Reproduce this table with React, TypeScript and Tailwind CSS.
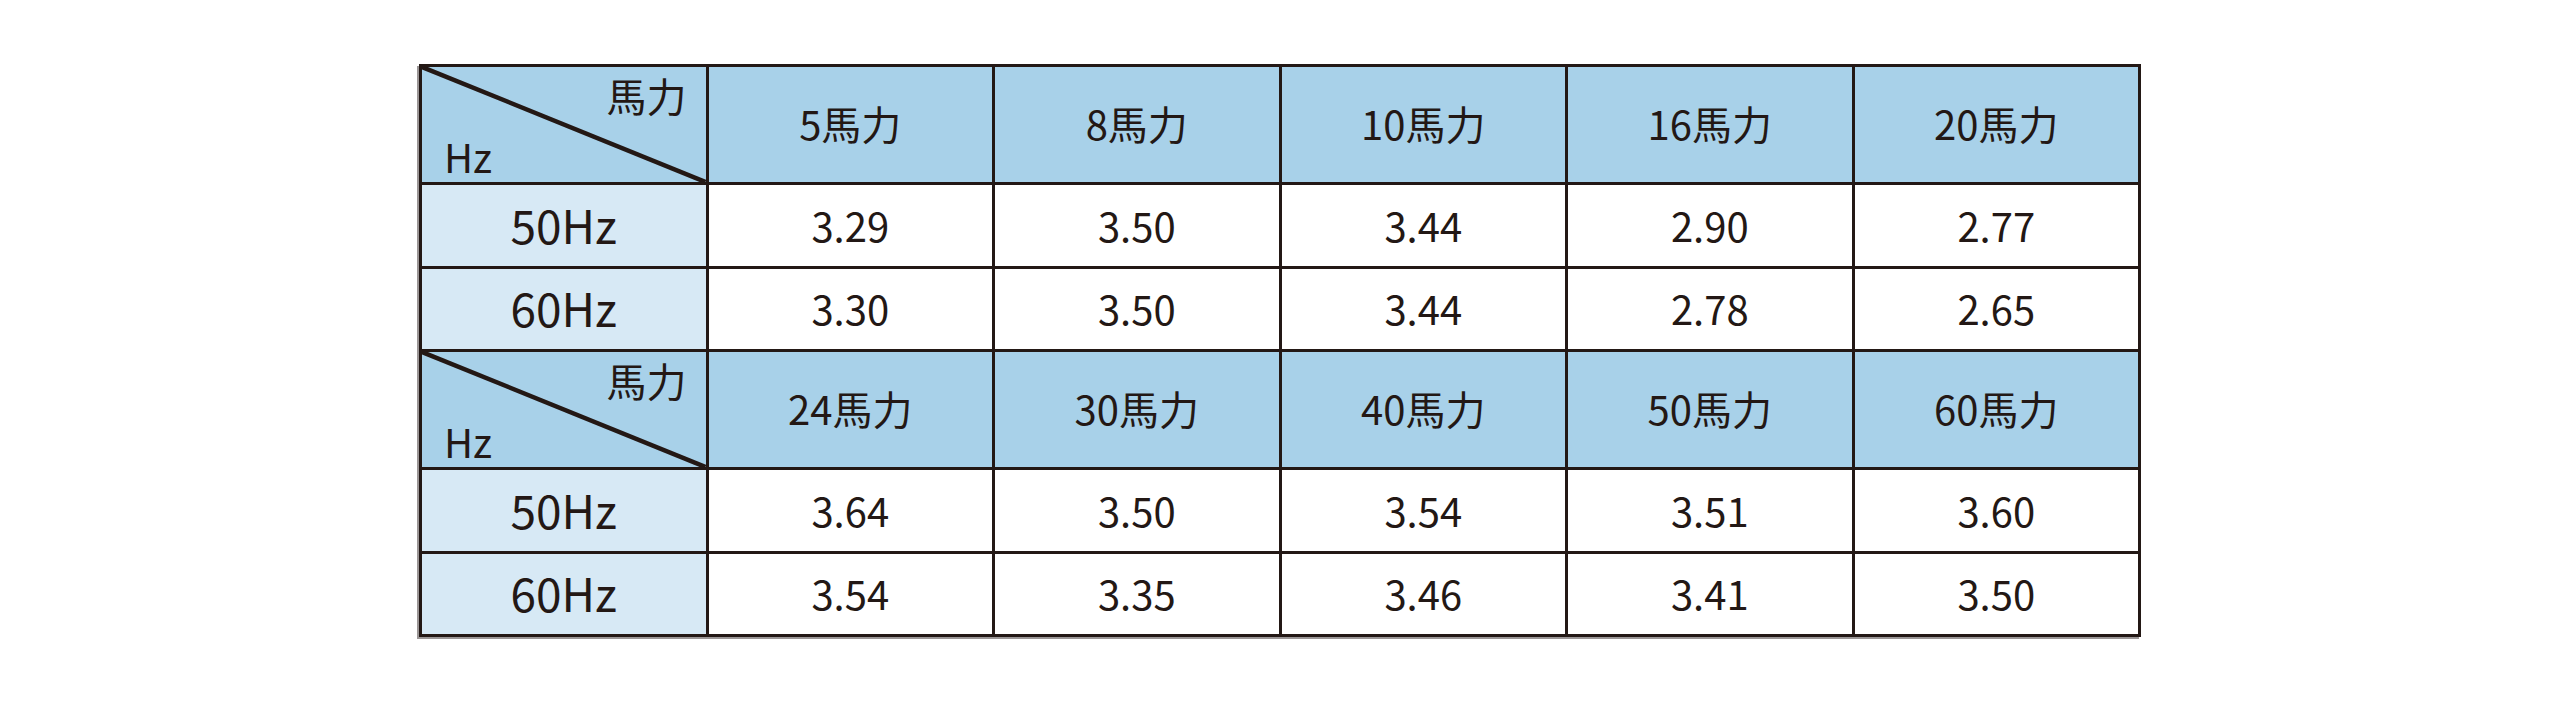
const font = { fontFamily: '"Noto Sans CJK JP", "Noto Sans", sans-serif' };

type Block = {
    heads: string[];
    hz50: string[];
    hz60: string[];
};

const blocks: Block[] = [
    {
        heads: ["5馬力", "8馬力", "10馬力", "16馬力", "20馬力"],
        hz50: ["3.29", "3.50", "3.44", "2.90", "2.77"],
        hz60: ["3.30", "3.50", "3.44", "2.78", "2.65"],
    },
    {
        heads: ["24馬力", "30馬力", "40馬力", "50馬力", "60馬力"],
        hz50: ["3.64", "3.50", "3.54", "3.51", "3.60"],
        hz60: ["3.54", "3.35", "3.46", "3.41", "3.50"],
    },
];

// the corner cell with the diagonal split
function CornerCell() {
    return (
        <div className="relative bg-[#a8d1e9]">
            <svg
                className="absolute inset-0 h-full w-full"
                preserveAspectRatio="none"
                viewBox="0 0 100 100"
            >
                <line
                    x1="0"
                    y1="0"
                    x2="100"
                    y2="100"
                    stroke="#231815"
                    strokeWidth="4.5"
                    vectorEffect="non-scaling-stroke"
                />
            </svg>
            <span className="absolute right-[19px] top-[8px] text-[40px] leading-none">
                馬力
            </span>
            <span className="absolute left-[22px] bottom-[6px] text-[40px] leading-none">
                Hz
            </span>
        </div>
    );
}

function HeadCell({ label }: { label: string }) {
    return (
        <div className="flex items-center justify-center bg-[#a8d1e9] text-[40px] leading-none pb-[4px]">
            {label}
        </div>
    );
}

function LabelCell({ label }: { label: string }) {
    return (
        <div className="flex items-center justify-center bg-[#d7e9f5] text-[46px] leading-none pb-[4px]">
            {label}
        </div>
    );
}

function ValueCell({ value }: { value: string }) {
    return (
        <div className="flex items-center justify-center bg-white text-[40px] leading-none pb-[2px]">
            {value}
        </div>
    );
}

export default function App() {
    return (
        <div className="min-h-[718px] w-full bg-white pt-[64px]" style={font}>
            <div
                className="mx-auto grid w-[1722px] grid-cols-6 grid-rows-[115px_81px_80px_115px_81px_80px] gap-[3px] bg-[#231815] p-[3px] text-[#231815] shadow-[-2px_2px_0_#9b9696]"
            >
                {blocks.map((block, i) => (
                    <div key={i} className="contents">
                        <CornerCell />
                        {block.heads.map((h) => (
                            <HeadCell key={h} label={h} />
                        ))}
                        <LabelCell label="50Hz" />
                        {block.hz50.map((v, j) => (
                            <ValueCell key={j} value={v} />
                        ))}
                        <LabelCell label="60Hz" />
                        {block.hz60.map((v, j) => (
                            <ValueCell key={j} value={v} />
                        ))}
                    </div>
                ))}
            </div>
        </div>
    );
}
